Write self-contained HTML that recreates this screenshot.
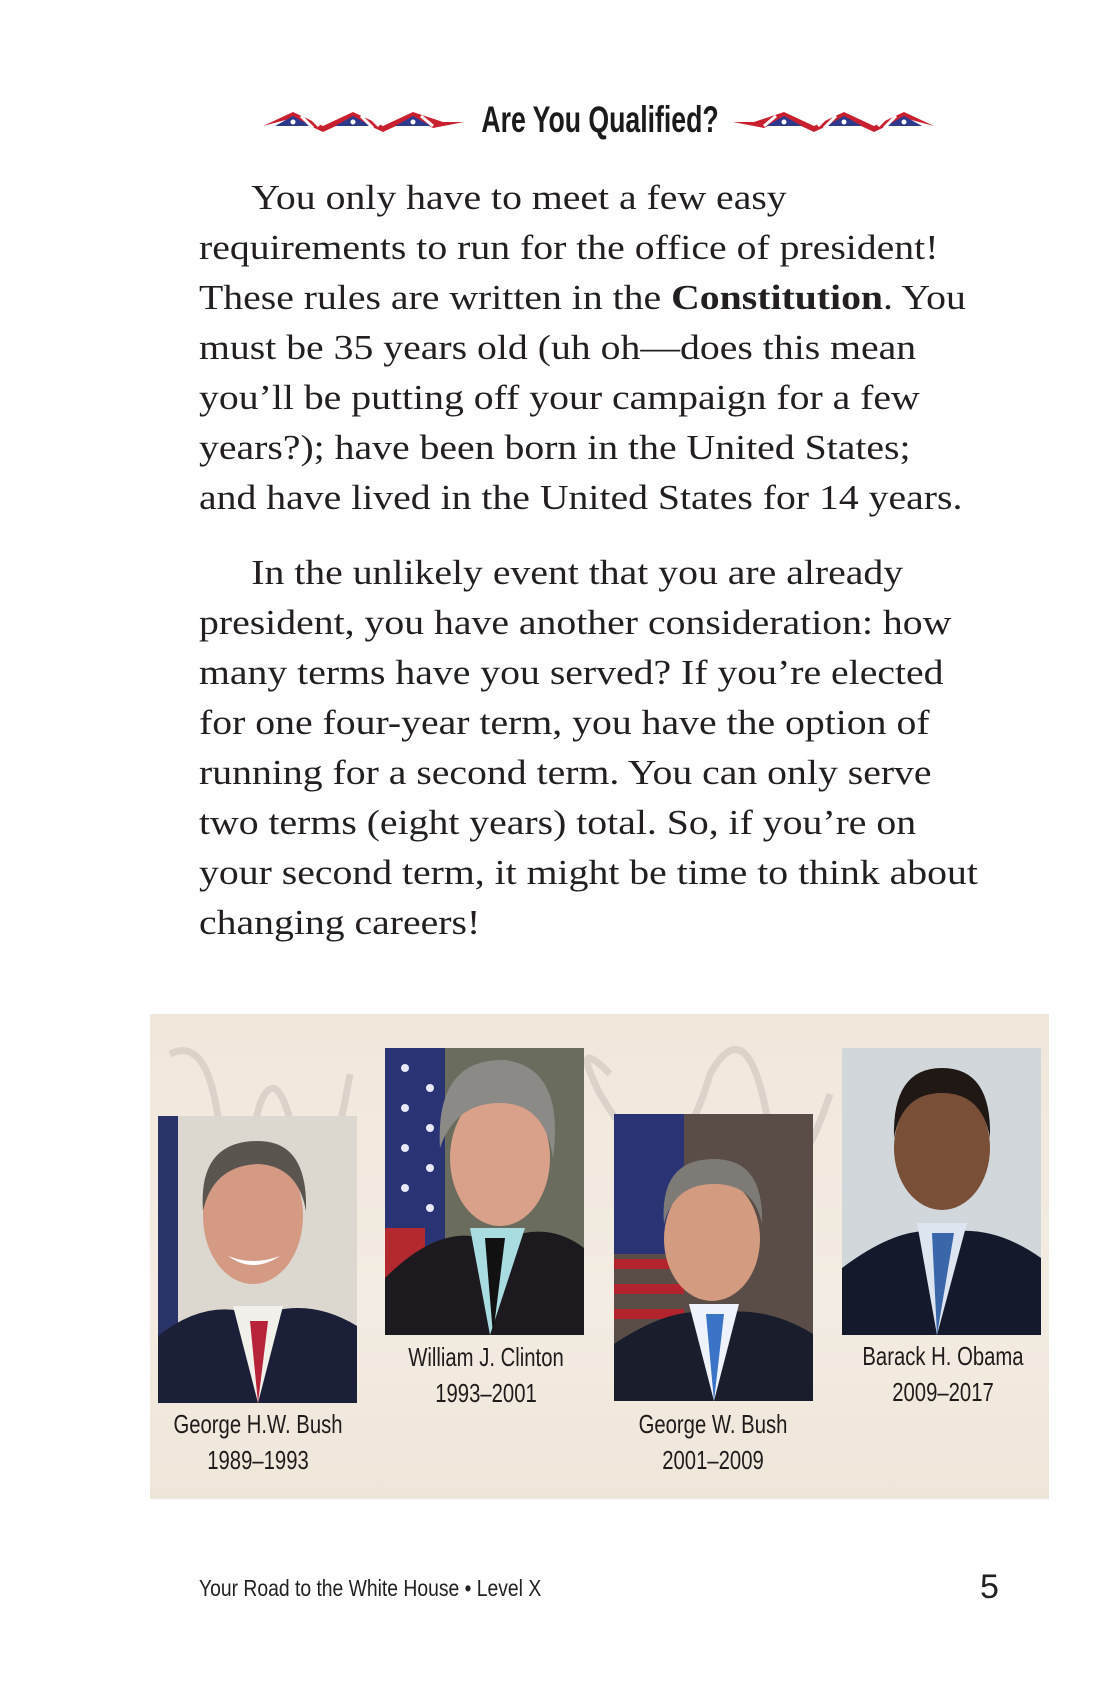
<!DOCTYPE html>
<html><head><meta charset="utf-8"><style>
*{margin:0;padding:0;box-sizing:border-box}
body{width:1100px;height:1700px;background:#fff;position:relative;overflow:hidden;font-family:"Liberation Serif",serif;color:#231f20}
.title{position:absolute;left:400px;top:99px;width:400px;text-align:center;font-family:"Liberation Sans",sans-serif;font-weight:bold;font-size:37px;line-height:42px;color:#1a1a1a;white-space:nowrap;transform:scaleX(0.72);transform-origin:center}
.orn{position:absolute;top:108px}
.txt{position:absolute;left:199px;width:800px;font-size:35px;line-height:50px;transform:scaleX(1.135);transform-origin:left top}
.txt p{text-indent:46px;white-space:nowrap}
.panel{position:absolute;left:150px;top:1014px;width:899px;height:485px;background:linear-gradient(180deg,#f1e8dc,#f3ece2 60%,#efe6da)}
.ph{position:absolute;width:199px;height:287px;overflow:hidden}
.cap{position:absolute;width:240px;text-align:center;font-family:"Liberation Sans",sans-serif;font-size:26px;line-height:36px;color:#1f1b1b;white-space:nowrap;transform:scaleX(0.78);transform-origin:center}
.foot{position:absolute;left:199px;top:1575px;font-family:"Liberation Sans",sans-serif;font-size:23px;color:#222;white-space:nowrap;transform:scaleX(0.84);transform-origin:left}
.pn{position:absolute;left:980px;top:1568px;font-family:"Liberation Sans",sans-serif;font-size:34px;color:#222}
</style></head><body>

<svg class="orn" style="left:263px" width="201" height="26" viewBox="0 0 201 26">
<polygon points="0,18 30,4 60,18 90,4 120,18 150,4 180,14 201,14 170,20 150,10 120,24 90,10 60,24 30,10" fill="#c8202f"/>
<polygon points="12,18 30,8 48,18" fill="#2d3a8c"/><polygon points="72,18 90,8 108,18" fill="#2d3a8c"/><polygon points="132,18 150,8 168,18" fill="#2d3a8c"/>
<g stroke="#fff" stroke-width="3"><line x1="38" y1="8" x2="50" y2="20"/><line x1="98" y1="8" x2="110" y2="20"/><line x1="158" y1="8" x2="170" y2="18"/><line x1="45" y1="7" x2="56" y2="18"/><line x1="105" y1="7" x2="116" y2="18"/></g>
<g fill="#fff"><circle cx="30" cy="14" r="2.5"/><circle cx="90" cy="14" r="2.5"/><circle cx="150" cy="14" r="2.5"/></g>
</svg>
<div class="title">Are You Qualified?</div>
<svg class="orn" style="left:733px" width="201" height="26" viewBox="0 0 201 26">
<g transform="translate(201,0) scale(-1,1)">
<polygon points="0,18 30,4 60,18 90,4 120,18 150,4 180,14 201,14 170,20 150,10 120,24 90,10 60,24 30,10" fill="#c8202f"/>
<polygon points="12,18 30,8 48,18" fill="#2d3a8c"/><polygon points="72,18 90,8 108,18" fill="#2d3a8c"/><polygon points="132,18 150,8 168,18" fill="#2d3a8c"/>
<g stroke="#fff" stroke-width="3"><line x1="38" y1="8" x2="50" y2="20"/><line x1="98" y1="8" x2="110" y2="20"/><line x1="158" y1="8" x2="170" y2="18"/><line x1="45" y1="7" x2="56" y2="18"/><line x1="105" y1="7" x2="116" y2="18"/></g>
<g fill="#fff"><circle cx="30" cy="14" r="2.5"/><circle cx="90" cy="14" r="2.5"/><circle cx="150" cy="14" r="2.5"/></g>
</g></svg>

<div class="txt" style="top:173px">
<p>You only have to meet a few easy</p>
<p style="text-indent:0">requirements to run for the office of president!</p>
<p style="text-indent:0">These rules are written in the <b>Constitution</b>. You</p>
<p style="text-indent:0">must be 35 years old (uh oh—does this mean</p>
<p style="text-indent:0">you’ll be putting off your campaign for a few</p>
<p style="text-indent:0">years?); have been born in the United States;</p>
<p style="text-indent:0">and have lived in the United States for 14 years.</p>
</div>
<div class="txt" style="top:548px">
<p>In the unlikely event that you are already</p>
<p style="text-indent:0">president, you have another consideration: how</p>
<p style="text-indent:0">many terms have you served? If you’re elected</p>
<p style="text-indent:0">for one four-year term, you have the option of</p>
<p style="text-indent:0">running for a second term. You can only serve</p>
<p style="text-indent:0">two terms (eight years) total. So, if you’re on</p>
<p style="text-indent:0">your second term, it might be time to think about</p>
<p style="text-indent:0">changing careers!</p>
</div>

<div class="panel">
<svg width="899" height="485" style="position:absolute;left:0;top:0" fill="none" stroke="#d6cec4" stroke-width="7" opacity="0.8">
<path d="M20 40 Q60 20 70 120 Q80 200 110 90 Q130 40 150 150 Q170 230 200 60"/>
<path d="M460 60 Q420 20 450 80 Q520 200 560 60 Q600 -10 620 120 Q640 200 680 80"/>
<path d="M720 80 Q760 10 800 90 Q830 160 860 70"/>
</svg>
</div>

<svg class="ph" style="left:158px;top:1116px" viewBox="0 0 199 287">
<rect width="199" height="287" fill="#dcd7cf"/><rect width="20" height="287" fill="#2b3468"/>
<path d="M0 287 L0 220 Q50 180 100 200 Q150 180 199 210 L199 287Z" fill="#1b2038"/>
<path d="M75 190 L100 287 L125 190Z" fill="#f2f0ea"/><path d="M92 205 L100 287 L110 205Z" fill="#b7243a"/>
<ellipse cx="95" cy="100" rx="50" ry="68" fill="#d59a84"/>
<path d="M45 95 Q40 25 100 25 Q150 25 148 95 Q140 50 100 48 Q55 50 45 95Z" fill="#5b5550"/>
<path d="M70 140 Q95 158 122 140 Q95 150 70 140Z" fill="#fff"/>
</svg>
<svg class="ph" style="left:385px;top:1048px" viewBox="0 0 199 287">
<rect width="199" height="287" fill="#6a6d5e"/><rect width="60" height="287" fill="#2a3475"/>
<g fill="#e7e9f4"><circle cx="20" cy="20" r="4"/><circle cx="45" cy="40" r="4"/><circle cx="20" cy="60" r="4"/><circle cx="45" cy="80" r="4"/><circle cx="20" cy="100" r="4"/><circle cx="45" cy="120" r="4"/><circle cx="20" cy="140" r="4"/><circle cx="45" cy="160" r="4"/></g>
<rect x="0" y="180" width="40" height="107" fill="#b42830"/>
<path d="M0 287 L0 230 Q60 170 110 195 Q160 170 199 200 L199 287Z" fill="#1d1a1f"/>
<path d="M85 180 L105 287 L140 180Z" fill="#a8dce0"/><path d="M100 190 L108 287 L120 190Z" fill="#111"/>
<ellipse cx="115" cy="110" rx="50" ry="68" fill="#d9a08a"/>
<path d="M55 100 Q50 10 120 12 Q180 20 168 110 Q160 55 115 55 Q70 55 55 100Z" fill="#8c8a86"/>
</svg>
<svg class="ph" style="left:614px;top:1114px" viewBox="0 0 199 287">
<rect width="199" height="287" fill="#5a4c46"/><rect width="70" height="140" fill="#2a3475"/>
<g stroke="#b3232e" stroke-width="10"><line x1="0" y1="150" x2="70" y2="150"/><line x1="0" y1="175" x2="70" y2="175"/><line x1="0" y1="200" x2="70" y2="200"/></g>
<path d="M0 287 L0 230 Q60 190 100 200 Q150 190 199 220 L199 287Z" fill="#1a1e2c"/>
<path d="M75 190 L100 287 L125 190Z" fill="#eef2fb"/><path d="M92 200 L100 287 L110 200Z" fill="#3b73c6"/>
<ellipse cx="98" cy="125" rx="48" ry="62" fill="#d39c80"/>
<path d="M50 110 Q45 45 100 45 Q150 45 148 110 Q140 70 100 70 Q60 70 50 110Z" fill="#7e7b76"/>
</svg>
<svg class="ph" style="left:842px;top:1048px" viewBox="0 0 199 287">
<rect width="199" height="287" fill="#d2d7dc"/>
<path d="M0 287 L0 220 Q60 175 100 185 Q150 175 199 210 L199 287Z" fill="#141a2b"/>
<path d="M75 175 L95 287 L125 175Z" fill="#dde6f0"/><path d="M90 185 L95 287 L112 185Z" fill="#3a66aa"/>
<ellipse cx="100" cy="100" rx="48" ry="62" fill="#7a4f37"/>
<path d="M52 90 Q50 20 100 20 Q150 20 148 90 Q140 45 100 45 Q60 45 52 90Z" fill="#1f1814"/>
</svg>

<div class="cap" style="left:138px;top:1406px">George H.W. Bush<br>1989–1993</div>
<div class="cap" style="left:366px;top:1339px">William J. Clinton<br>1993–2001</div>
<div class="cap" style="left:593px;top:1406px">George W. Bush<br>2001–2009</div>
<div class="cap" style="left:823px;top:1338px">Barack H. Obama<br>2009–2017</div>

<div class="foot">Your Road to the White House • Level X</div>
<div class="pn">5</div>
</body></html>
